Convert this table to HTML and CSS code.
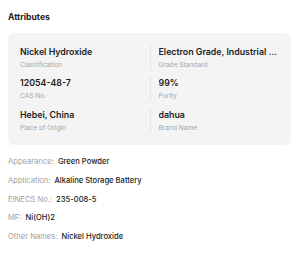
FILE: index.html
```html
<!DOCTYPE html>
<html>
<head>
<meta charset="utf-8">
<link rel="stylesheet" href="styles.css">
</head>
<body>
<section class="attrs">
  <h2 class="attrs-title">Attributes</h2>
  <div class="attrs-card">
    <div class="attr-row">
      <div class="attr-cell">
        <div class="attr-value">Nickel Hydroxide</div>
        <div class="attr-label">Classification</div>
      </div>
      <div class="attr-cell attr-cell--right">
        <div class="attr-value">Electron Grade, Industrial Grade</div>
        <div class="attr-label">Grade Standard</div>
      </div>
    </div>
    <div class="attr-row">
      <div class="attr-cell">
        <div class="attr-value">12054-48-7</div>
        <div class="attr-label">CAS No.</div>
      </div>
      <div class="attr-cell attr-cell--right">
        <div class="attr-value">99%</div>
        <div class="attr-label">Purity</div>
      </div>
    </div>
    <div class="attr-row">
      <div class="attr-cell">
        <div class="attr-value">Hebei, China</div>
        <div class="attr-label">Place of Origin</div>
      </div>
      <div class="attr-cell attr-cell--right">
        <div class="attr-value">dahua</div>
        <div class="attr-label">Brand Name</div>
      </div>
    </div>
  </div>
  <ul class="attr-list">
    <li><span class="attr-key">Appearance:</span><span class="attr-val">Green Powder</span></li>
    <li><span class="attr-key">Application:</span><span class="attr-val">Alkaline Storage Battery</span></li>
    <li><span class="attr-key">EINECS No.:</span><span class="attr-val">235-008-5</span></li>
    <li><span class="attr-key">MF:</span><span class="attr-val">Ni(OH)2</span></li>
    <li><span class="attr-key">Other Names:</span><span class="attr-val">Nickel Hydroxide</span></li>
  </ul>
</section>
</body>
</html>
```
FILE: styles.css
```css
html, body {
  margin: 0;
  padding: 0;
  background: #fff;
}

body {
  font-family: Inter, "Noto Sans", sans-serif;
  color: #222;
}

.attrs {
  padding: 11px 9px 0 8px;
}

.attrs-title {
  margin: 0;
  font-size: 8.6px;
  font-weight: 700;
  line-height: 12px;
  color: #222;
}

.attrs-card {
  margin-top: 10px;
  background: #f4f4f4;
  border-radius: 6px;
  padding: 11.5px 12px 12.5px 12px;
  display: flex;
  flex-direction: column;
  gap: 6.5px;
}

.attr-row {
  display: grid;
  grid-template-columns: 1fr 1fr;
}

.attr-cell {
  min-width: 0;
  padding-right: 8px;
}

.attr-cell--right {
  border-left: 1px solid #e4e4e4;
  padding-left: 8px;
  padding-right: 0;
}

/* long values are clipped with an ellipsis */
.attr-value {
  font-size: 8.8px;
  font-weight: 600;
  line-height: 13px;
  color: #222;
  white-space: nowrap;
  overflow: hidden;
  text-overflow: ellipsis;
}

.attr-label {
  margin-top: 3px;
  font-size: 6.6px;
  line-height: 9px;
  color: #a5a5a5;
}

.attr-list {
  list-style: none;
  margin: 11px 0 0;
  padding: 0;
  display: flex;
  flex-direction: column;
  gap: 6.1px;
}

.attr-list li {
  font-size: 7.6px;
  line-height: 12.7px;
}

.attr-key {
  color: #a0a0a0;
  margin-right: 4px;
}

.attr-val {
  color: #222;
  font-weight: 500;
}
```
